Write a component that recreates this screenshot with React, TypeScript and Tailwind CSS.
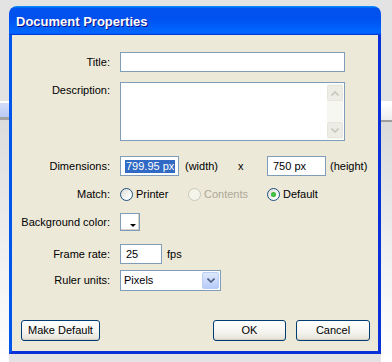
import React from 'react';

const Label: React.FC<{ text: string; top?: boolean }> = ({ text, top }) => (
  <div className={`w-[99px] shrink-0 pr-[1px] text-right ${top ? 'self-start pt-[2px]' : ''}`}>{text}</div>
);

const Radio: React.FC<{ label: string; checked?: boolean; disabled?: boolean; width: string }> = ({
  label,
  checked,
  disabled,
  width,
}) => (
  <div className={`flex items-center ${width}`}>
    <span
      className={`flex h-[13px] w-[13px] items-center justify-center rounded-full border ${
        disabled
          ? 'border-[#cac8bb] bg-[#f5f4ea]'
          : 'border-[#1c5180] bg-[linear-gradient(135deg,#dcdbd5_0%,#ffffff_80%)]'
      }`}
    >
      {checked && <span className="h-[5px] w-[5px] rounded-full bg-[radial-gradient(circle,#55d051_0%,#21a121_100%)]" />}
    </span>
    <span className={`ml-[3px] ${disabled ? 'text-[#aca899]' : ''}`}>{label}</span>
  </div>
);

const XpButton: React.FC<{ label: string; w: string }> = ({ label, w }) => (
  <div
    className={`flex h-[21px] ${w} items-center justify-center rounded-[3px] border border-[#003c74] bg-[linear-gradient(180deg,#ffffff_0%,#f4f3ee_60%,#e3e1d6_100%)] shadow-[inset_0_-1px_0_#d6d0c5]`}
  >
    {label}
  </div>
);

const Chevron: React.FC<{ up?: boolean; color: string }> = ({ up, color }) => (
  <svg width="8" height="5" viewBox="0 0 8 5">
    <path d={up ? 'M0.5 4.5 L4 1 L7.5 4.5' : 'M0.5 0.5 L4 4 L7.5 0.5'} fill="none" stroke={color} strokeWidth="1.6" />
  </svg>
);

export default function App() {
  return (
    <div className="flex h-[362px] w-[392px] overflow-hidden bg-[#e3e3e3] font-['Liberation_Sans',Arial,sans-serif] text-[11px] leading-[13px] text-black">
      {/* left backdrop strip */}
      <div className="flex w-[9px] shrink-0 flex-col">
        <div className="h-[101px] bg-[#e3e3e3]" />
        <div className="h-[2px] bg-white" />
        <div className="h-[14px] bg-[linear-gradient(180deg,#d3ddf8,#b9caf3)]" />
        <div className="h-[3px] bg-[#a3a3a3]" />
        <div className="flex-1 bg-[linear-gradient(180deg,#dcdcdc,#f2f2f2_60%,#ffffff)]" />
      </div>

      {/* window */}
      <div className="mt-[6px] flex h-[348px] w-[372px] shrink-0 flex-col">
        <div className="flex h-[29px] items-center rounded-t-[8px] bg-[linear-gradient(180deg,#0997ff_0%,#0053ee_8%,#0050ee_40%,#0066ff_88%,#0066ff_93%,#005bff_95%,#003dd7_96%,#003dd7_100%)] pl-[7px]">
          <span className="pt-[1px] text-[13px] font-bold text-white [text-shadow:1px_1px_#0f1089]">Document Properties</span>
        </div>

        <div className="flex flex-1 flex-col border-x-[3px] border-b-[3px] border-l-[#0055ea] border-r-[#0831d9] border-b-[#0831d9] bg-[#ece9d8] pb-[10px] pl-[9px] pr-[8px]">
          <div className="-ml-[9px] mt-[17px] flex items-center">
            <Label text="Title:" />
            <div className="ml-[9px] h-[20px] w-[225px] border border-[#7f9db9] bg-white" />
          </div>

          <div className="-ml-[9px] mt-[10px] flex">
            <Label text="Description:" top />
            <div className="ml-[9px] flex h-[59px] w-[225px] justify-end border border-[#7f9db9] bg-white p-[1px]">
              <div className="flex w-[16px] flex-col justify-between bg-[#f7f7f2] py-[1px]">
                <div className="flex h-[16px] items-center justify-center rounded-[2px] border border-[#e8e6dc] bg-[#eeede5]">
                  <Chevron up color="#c9c7ba" />
                </div>
                <div className="flex h-[16px] items-center justify-center rounded-[2px] border border-[#e8e6dc] bg-[#eeede5]">
                  <Chevron color="#c9c7ba" />
                </div>
              </div>
            </div>
          </div>

          <div className="-ml-[9px] mt-[15px] flex items-center">
            <Label text="Dimensions:" />
            <div className="ml-[9px] flex h-[20px] w-[59px] items-center border border-[#7f9db9] bg-white pl-[4px]">
              <span className="bg-[#316ac5] px-[1px] text-white">799.95 px</span>
            </div>
            <span className="ml-[6px] w-[53px]">(width)</span>
            <span className="w-[29px]">x</span>
            <div className="flex h-[20px] w-[59px] items-center border border-[#7f9db9] bg-white pl-[5px]">750 px</div>
            <span className="ml-[4px]">(height)</span>
          </div>

          <div className="-ml-[9px] mt-[9px] flex h-[18px] items-center">
            <Label text="Match:" />
            <div className="ml-[9px] flex items-center">
              <Radio label="Printer" width="w-[68px]" />
              <Radio label="Contents" disabled width="w-[79px]" />
              <Radio label="Default" checked width="w-[60px]" />
            </div>
          </div>

          <div className="-ml-[9px] mt-[10px] flex items-center">
            <Label text="Background color:" />
            <div className="ml-[9px] flex h-[18px] w-[20px] items-end justify-end border border-[#7f9db9] bg-white pb-[3px] pr-[3px] shadow-[inset_-1px_-1px_0_#d4d0c8]">
              <span className="h-0 w-0 border-x-[3px] border-t-[3px] border-x-transparent border-t-black" />
            </div>
          </div>

          <div className="-ml-[9px] mt-[13px] flex items-center">
            <Label text="Frame rate:" />
            <div className="ml-[9px] flex h-[20px] w-[42px] items-center border border-[#7f9db9] bg-white pl-[5px]">25</div>
            <span className="ml-[5px]">fps</span>
          </div>

          <div className="-ml-[9px] mt-[6px] flex items-center">
            <Label text="Ruler units:" />
            <div className="ml-[9px] flex h-[21px] w-[101px] items-center justify-between border border-[#7f9db9] bg-white p-[1px] pl-[3px]">
              <span>Pixels</span>
              <div className="flex h-full w-[17px] items-center justify-center rounded-[2px] border border-[#b9cdf7] bg-[linear-gradient(180deg,#dfe9fd,#b6cbf8)]">
                <Chevron color="#4d6185" />
              </div>
            </div>
          </div>

          <div className="mt-auto flex items-center">
            <XpButton label="Make Default" w="w-[79px]" />
            <div className="flex-1" />
            <XpButton label="OK" w="w-[73px]" />
            <div className="w-[10px]" />
            <XpButton label="Cancel" w="w-[74px]" />
          </div>
        </div>
      </div>

      {/* right backdrop strip */}
      <div className="flex flex-1 flex-col">
        <div className="h-[101px] bg-[#e3e3e3]" />
        <div className="h-[2px] bg-white" />
        <div className="h-[17px] bg-[linear-gradient(180deg,#ffffff,#ececec)]" />
        <div className="h-[2px] bg-[#9c9c9c]" />
        <div className="flex-1 bg-[linear-gradient(180deg,#dadada,#f2f2f2_60%,#ffffff)]" />
      </div>
    </div>
  );
}
